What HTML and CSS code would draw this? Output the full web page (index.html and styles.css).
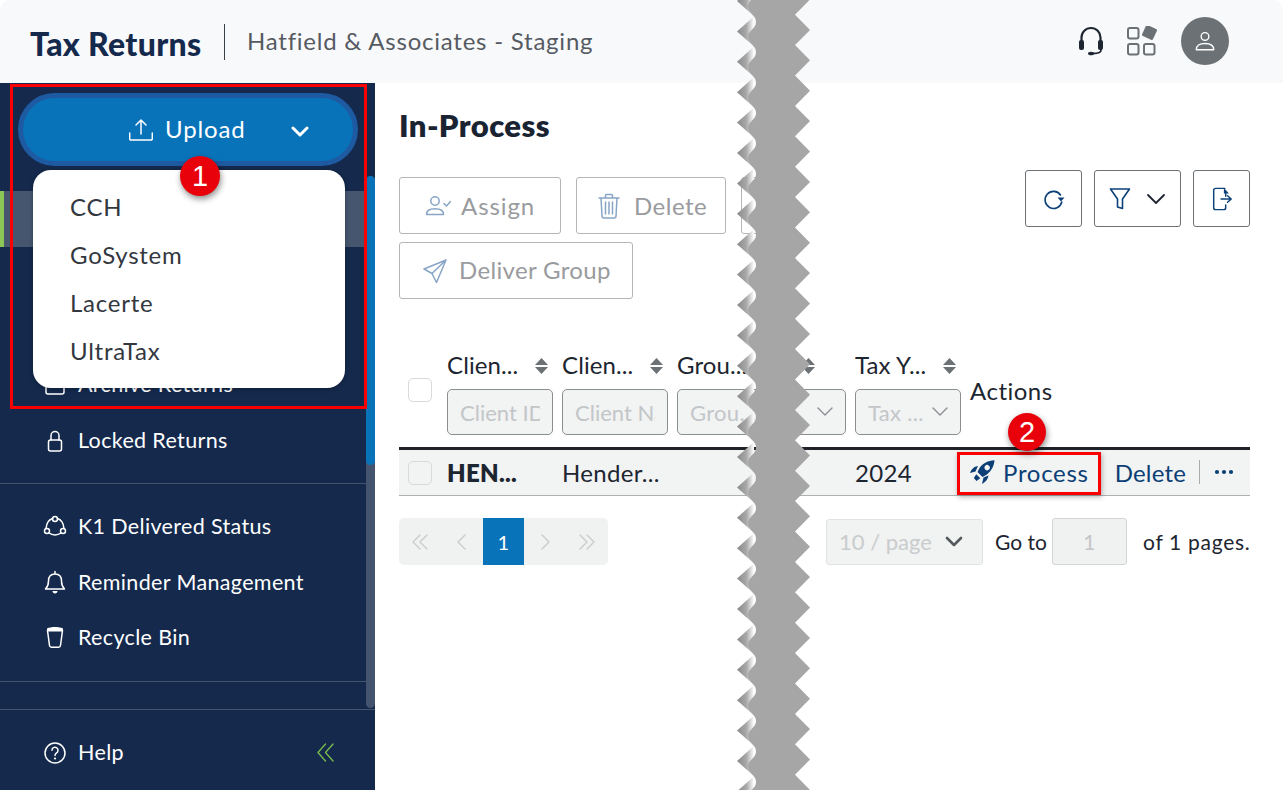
FILE: index.html
```html
<!DOCTYPE html>
<html lang="en">
<head>
<meta charset="utf-8">
<title>Tax Returns</title>
<link rel="stylesheet" href="styles.css">
</head>
<body>
<div class="app">
  <header class="topbar">
    <span class="brand">Tax Returns</span>
    <span class="brand-sep"></span>
    <span class="firm">Hatfield &amp; Associates - Staging</span>
    <div class="top-icons">
      <svg class="ico-headset" viewBox="0 0 26 30"><path class="line-dark thick" d="M3.500 17V11.500a9.500 9.500 0 0 1 19 0V17"/><rect class="fill-dark" x="1" y="14" width="5" height="10" rx="2"/><rect class="fill-dark" x="20" y="14" width="5" height="10" rx="2"/><path class="line-dark" d="M23 24c0 2.500-3 3.500-8 3.500"/><ellipse class="fill-dark" cx="13" cy="27.500" rx="3" ry="1.800"/></svg>
      <svg class="ico-apps" viewBox="0 0 30 30"><rect class="line-grey" x="1" y="2" width="10.500" height="10.500" rx="2"/><rect class="line-grey" x="1" y="18" width="10.500" height="10.500" rx="2"/><rect class="line-grey" x="17" y="18" width="10.500" height="10.500" rx="2"/><rect class="fill-grey" x="16.500" y="0.500" width="12" height="12" rx="1.500" transform="rotate(25 22.500 6.500)"/></svg>
      <span class="avatar"><svg viewBox="0 0 24 24"><circle class="line-white" cx="12" cy="7" r="4.200"/><path class="line-white" d="M2.500 21.500c0-4.500 3.500-6.800 9.500-6.800s9.500 2.300 9.500 6.800z"/></svg></span>
    </div>
  </header>

  <aside class="sidebar">
    <div class="upload-wrap">
      <button class="upload">
        <svg class="ico-upload" viewBox="0 0 24 22"><path class="line-white" d="M12 15V1.500M7 6l5-5 5 5M.7 14v5.800a1.200 1.200 0 0 0 1.200 1.200h20.200a1.200 1.200 0 0 0 1.200-1.200V14"/></svg>
        <span class="upload-label">Upload</span>
        <svg class="ico-caret" viewBox="0 0 18 12"><path class="line-white thick" d="M2 2l7 7 7-7"/></svg>
      </button>
    </div>
    <nav class="nav">
      <div class="nav-item selected"></div>
      <div class="nav-item"></div>
      <div class="nav-item"></div>
      <div class="nav-item">
        <svg class="nav-ico" viewBox="0 0 24 24"><rect class="line-white" x="3" y="5" width="18" height="16" rx="2"/></svg>
        <span>Archive Returns</span>
      </div>
      <div class="nav-item">
        <svg class="nav-ico" viewBox="0 0 24 24"><path class="line-white" d="M8 11V6.500a4 4 0 0 1 8 0V11"/><rect class="line-white" x="5.500" y="11" width="13" height="11" rx="2"/></svg>
        <span>Locked Returns</span>
      </div>
    </nav>
    <nav class="nav nav-second">
      <div class="nav-item">
        <svg class="nav-ico" viewBox="0 0 24 24"><circle class="line-white" cx="12" cy="5" r="2.500"/><circle class="line-white" cx="4" cy="17" r="2.500"/><circle class="line-white" cx="20" cy="17" r="2.500"/><path class="line-white" d="M9.700 4.500C6 5.500 3.500 9 3 14.500M14.300 4.500C18 5.500 20.500 9 21 14.500M6 19c3.500 2.500 8.500 2.500 12 0"/></svg>
        <span>K1 Delivered Status</span>
      </div>
      <div class="nav-item">
        <svg class="nav-ico" viewBox="0 0 24 24"><path class="line-white" d="M12 4c-4.500 0-6.500 3-6.500 7 0 4-1 6-3 8h19c-2-2-3-4-3-8 0-4-2-7-6.500-7zM12 1.500V4"/><path class="fill-white" d="M9.500 21h5c0 1.500-1 2.500-2.500 2.500S9.500 22.500 9.500 21z"/></svg>
        <span>Reminder Management</span>
      </div>
      <div class="nav-item">
        <svg class="nav-ico" viewBox="0 0 24 24"><path class="line-white" d="M4.500 5.500l2 15a2 2 0 0 0 2 1.700h7a2 2 0 0 0 2-1.700l2-15"/><path class="fill-white" d="M4 3.500C8 1.500 16 1.500 20 3.500V6.500H4z"/></svg>
        <span>Recycle Bin</span>
      </div>
    </nav>
    <div class="side-foot">
      <svg class="nav-ico" viewBox="0 0 24 24"><circle class="line-white" cx="12" cy="12" r="10"/><path class="line-white" d="M9 9.300a3 3 0 1 1 4.600 2.500c-1 .7-1.600 1.300-1.600 2.700"/><circle class="fill-white" cx="12" cy="17.500" r="1.100"/></svg>
      <span class="help">Help</span>
      <svg class="ico-collapse" viewBox="0 0 18 20"><path class="line-green" d="M9 1L1 10l8 9M17 1L9 10l8 9"/></svg>
    </div>
    <div class="scroll-track"><div class="scroll-thumb"></div></div>
    <div class="red-box red-upload"></div>
    <ul class="menu">
      <li>CCH</li>
      <li>GoSystem</li>
      <li>Lacerte</li>
      <li>UltraTax</li>
    </ul>
    <span class="badge badge-one">1</span>
  </aside>

  <main class="content">
    <h1 class="page-title">In-Process</h1>
    <div class="toolbar">
      <div class="actions-left">
        <button class="btn btn-assign">
          <svg class="btn-ico" viewBox="0 0 26 22"><circle class="line-blue" cx="10" cy="6" r="4.200"/><path class="line-blue" d="M1.500 19.500c0-4 3.500-5.700 8.500-5.700s8.500 1.700 8.500 5.700zM19 8.500l2.500 2.500 4-4.500"/></svg>
          <span>Assign</span>
        </button>
        <button class="btn btn-delete">
          <svg class="btn-ico trash" viewBox="0 0 22 26"><path class="line-blue" d="M1 5h20M7.500 5V2.500a1 1 0 0 1 1-1h5a1 1 0 0 1 1 1V5M3 5l1 18a2 2 0 0 0 2 2h10a2 2 0 0 0 2-2l1-18M7.500 9v12M11 9v12M14.500 9v12"/></svg>
          <span>Delete</span>
        </button>
        <button class="btn btn-hidden"></button>
        <button class="btn btn-deliver">
          <svg class="btn-ico" viewBox="0 0 24 24"><path class="line-blue" d="M23 1L1 10l8 4.500 4.500 9zM23 1L9 14.500"/></svg>
          <span>Deliver Group</span>
        </button>
      </div>
      <div class="actions-right">
        <button class="tool tool-square"><svg class="tool-ico" viewBox="0 0 22 22"><path class="line-navy" d="M17.500 7A8.500 8.500 0 1 0 18.800 14"/><path class="fill-navy" d="M14.500 9.500h7l-3.500 4z"/></svg></button>
        <button class="tool tool-filter">
          <svg class="tool-ico" viewBox="0 0 22 24"><path class="line-navy" d="M1.500 2h19l-7 10v9.500l-5-1.500v-8z"/></svg>
          <svg class="tool-caret" viewBox="0 0 20 12"><path class="line-dark" d="M2 2l8 8 8-8"/></svg>
        </button>
        <button class="tool tool-square"><svg class="tool-ico" viewBox="0 0 22 26"><path class="line-navy" d="M14 1.500H4a2 2 0 0 0-2 2v19a2 2 0 0 0 2 2h9a2 2 0 0 0 2-2v-3M15 10V7"/><path class="fill-navy" d="M13 1l5.500 6H13z"/><path class="line-navy" d="M10 13h11M17 9.500l4 3.500-4 3.500"/></svg></button>
      </div>
    </div>

    <div class="grid-table">
      <div class="thead">
        <div class="th th-check"><span class="check"></span></div>
        <div class="th"><div class="th-title"><span class="th-label">Clien...</span><svg class="sort" viewBox="0 0 13 16"><path class="fill-sort" d="M6.500 0L13 7H0zM0 9h13L6.500 16z"/></svg></div><div class="filter-input"><input class="ph-input" placeholder="Client ID" disabled></div></div>
        <div class="th"><div class="th-title"><span class="th-label">Clien...</span><svg class="sort" viewBox="0 0 13 16"><path class="fill-sort" d="M6.500 0L13 7H0zM0 9h13L6.500 16z"/></svg></div><div class="filter-input"><input class="ph-input" placeholder="Client Name" disabled></div></div>
        <div class="th"><div class="th-title"><span class="th-label">Grou...</span><svg class="sort" viewBox="0 0 13 16"><path class="fill-sort" d="M6.500 0L13 7H0zM0 9h13L6.500 16z"/></svg></div><div class="filter-input"><span class="ph">Grou...</span></div></div>
        <div class="th"><div class="th-title th-right"><svg class="sort" viewBox="0 0 13 16"><path class="fill-sort" d="M6.500 0L13 7H0zM0 9h13L6.500 16z"/></svg></div><div class="filter-input filter-tail"><svg class="input-caret" viewBox="0 0 16 10"><path class="line-mid" d="M1 1l7 7 7-7"/></svg></div></div>
        <div class="th"><div class="th-title"><span class="th-label">Tax Y...</span><svg class="sort" viewBox="0 0 13 16"><path class="fill-sort" d="M6.500 0L13 7H0zM0 9h13L6.500 16z"/></svg></div><div class="filter-input"><span class="ph">Tax ...</span><svg class="input-caret" viewBox="0 0 16 10"><path class="line-mid" d="M1 1l7 7 7-7"/></svg></div></div>
        <div class="th th-actions">Actions</div>
      </div>
      <div class="tbody-row">
        <div class="td td-check"><span class="check"></span></div>
        <div class="td strong">HEN...</div>
        <div class="td">Hender...</div>
        <div class="td"></div>
        <div class="td"></div>
        <div class="td">2024</div>
        <div class="td td-actions">
          <a class="act act-process">
            <svg class="rocket" viewBox="0 0 25 24"><path class="fill-navy" fill-rule="evenodd" d="M24.500.2C18 .5 13 3 9.500 8L7.500 12l5 5 4-2.200C21.500 11 24 6 24.500.2zM15 6a2.700 2.700 0 1 1 3.800 3.800A2.700 2.700 0 0 1 15 6z"/><path class="fill-navy" d="M8 6C5 6.500 2 8 0 13l5.500-1.500zM18.500 15.500c-.5 3-2 6-6.500 8.500l1.500-6.500zM6.300 14.300l4 4L6.500 21 3.800 18z"/></svg>
            Process
          </a>
          <a class="act act-delete">Delete</a>
          <span class="act-sep"></span>
          <svg class="dots" viewBox="0 0 20 6"><circle class="fill-navy" cx="3" cy="3" r="2.100"/><circle class="fill-navy" cx="10" cy="3" r="2.100"/><circle class="fill-navy" cx="17" cy="3" r="2.100"/></svg>
        </div>
      </div>
    </div>

    <div class="pager-row">
      <div class="pager">
        <span class="page-btn"><svg viewBox="0 0 16 16"><path class="line-page" d="M8 1L1 8l7 7M15 1L8 8l7 7"/></svg></span>
        <span class="page-btn"><svg viewBox="0 0 16 16"><path class="line-page" d="M11 1L4 8l7 7"/></svg></span>
        <span class="page-btn current">1</span>
        <span class="page-btn"><svg viewBox="0 0 16 16"><path class="line-page" d="M5 1l7 7-7 7"/></svg></span>
        <span class="page-btn"><svg viewBox="0 0 16 16"><path class="line-page" d="M1 1l7 7-7 7M8 1l7 7-7 7"/></svg></span>
      </div>
      <div class="page-size">
        <span>10 / page</span>
        <svg viewBox="0 0 18 12"><path class="line-size" d="M2 2l7 7 7-7"/></svg>
      </div>
      <span class="goto">Go to</span>
      <div class="goto-input">1</div>
      <span class="of-pages">of 1 pages.</span>
    </div>

    <div class="red-box red-process"></div>
    <span class="badge badge-two">2</span>
  </main>

  <svg class="tear" viewBox="0 0 80 790" aria-hidden="true">
    <defs>
      <linearGradient id="toothShade" x1="0" x2="1" y1="0" y2="0">
        <stop offset="0" stop-color="#8a8a8a"/>
        <stop offset=".55" stop-color="#a8a8a8"/>
        <stop offset="1" stop-color="#ffffff"/>
      </linearGradient>
    </defs>
    <path fill="url(#toothShade)" d="M18-14.200l-17 15.200 17 15.200-17 15.200 17 15.200-17 15.200 17 15.200-17 15.200 17 15.200-17 15.200 17 15.200-17 15.200 17 15.200-17 15.200 17 15.200-17 15.200 17 15.200-17 15.200 17 15.200-17 15.200 17 15.200-17 15.200 17 15.200-17 15.200 17 15.200-17 15.200 17 15.200-17 15.200 17 15.200-17 15.200 17 15.200-17 15.200 17 15.200-17 15.200 17 15.200-17 15.200 17 15.200-17 15.200 17 15.200-17 15.200 17 15.200-17 15.200 17 15.200-17 15.200 17 15.200-17 15.200 17 15.200-17 15.200 17 15.200-17 15.200 17 15.200-17 15.200 17 15.200-17 15.200 17 15.200z"/>
    <path fill="#a6a6a6" d="M12-23.700c0 7 8 8.200 8 15.200s-8 8.200-8 15.200s8 8.200 8 15.200s-8 8.200-8 15.200s8 8.200 8 15.200s-8 8.200-8 15.200s8 8.200 8 15.200s-8 8.200-8 15.200s8 8.200 8 15.200s-8 8.200-8 15.200s8 8.200 8 15.200s-8 8.200-8 15.200s8 8.200 8 15.200s-8 8.200-8 15.200s8 8.200 8 15.200s-8 8.200-8 15.200s8 8.200 8 15.200s-8 8.200-8 15.200s8 8.200 8 15.200s-8 8.200-8 15.200s8 8.200 8 15.200s-8 8.200-8 15.200s8 8.200 8 15.200s-8 8.200-8 15.200s8 8.200 8 15.200s-8 8.200-8 15.200s8 8.200 8 15.200s-8 8.200-8 15.200s8 8.200 8 15.200s-8 8.200-8 15.200s8 8.200 8 15.200s-8 8.200-8 15.200s8 8.200 8 15.200s-8 8.200-8 15.200s8 8.200 8 15.200s-8 8.200-8 15.200s8 8.200 8 15.200s-8 8.200-8 15.200s8 8.200 8 15.200s-8 8.200-8 15.200s8 8.200 8 15.200s-8 8.200-8 15.200s8 8.200 8 15.200s-8 8.200-8 15.200s8 8.200 8 15.200s-8 8.200-8 15.200s8 8.200 8 15.200s-8 8.200-8 15.200s8 8.200 8 15.200s-8 8.200-8 15.200s8 8.200 8 15.200s-8 8.200-8 15.200s8 8.200 8 15.200s-8 8.200-8 15.200s8 8.200 8 15.200s-8 8.200-8 15.200H50V-23.700z"/>
    <path fill="#a6a6a6" d="M40-15.700H59l15 15.200-15 15.200 15 15.200-15 15.200 15 15.200-15 15.200 15 15.200-15 15.200 15 15.200-15 15.200 15 15.200-15 15.200 15 15.200-15 15.200 15 15.200-15 15.200 15 15.200-15 15.200 15 15.200-15 15.200 15 15.200-15 15.200 15 15.200-15 15.200 15 15.200-15 15.200 15 15.200-15 15.200 15 15.200-15 15.200 15 15.200-15 15.200 15 15.200-15 15.200 15 15.200-15 15.200 15 15.200-15 15.200 15 15.200-15 15.200 15 15.200-15 15.200 15 15.200-15 15.200 15 15.200-15 15.200 15 15.200-15 15.200 15 15.200-15 15.200 15 15.200-15 15.200 15 15.200-15 15.200 15 15.200-15 15.200H40z"/>
  </svg>
</div>
</body>
</html>
```
FILE: styles.css
```css
* { box-sizing: border-box; }
html, body { margin: 0; padding: 0; background: #fff; overflow: hidden; }
body { font-family: "Lato", "Noto Sans", sans-serif; color: #1d2530; }
button { font: inherit; background: none; padding: 0; cursor: default; }
ul { margin: 0; padding: 0; list-style: none; }

.app {
  position: relative;
  width: 1283px;
  height: 790px;
  display: grid;
  grid-template-columns: 375px 1fr;
  grid-template-rows: 83px 1fr;
  overflow: hidden;
}

/* SVG strokes and fills */
svg { display: block; flex: none; }
.line-dark, .line-grey, .line-white, .line-green, .line-blue, .line-navy, .line-mid, .line-page, .line-size { fill: none; stroke-linecap: round; stroke-linejoin: round; }
.line-dark { stroke: #1d2530; stroke-width: 1.8; }
.line-dark.thick { stroke-width: 2.2; }
.line-grey { stroke: #6c7175; stroke-width: 2; }
.line-white { stroke: #fff; stroke-width: 1.5; }
.line-white.thick { stroke-width: 3; }
.line-green { stroke: #7cc04b; stroke-width: 1.3; }
.line-blue { stroke: #88a5c6; stroke-width: 1.5; }
.line-navy { stroke: #0b4079; stroke-width: 1.6; }
.line-mid { stroke: #8a8f94; stroke-width: 1.4; }
.line-page { stroke: #c9cccd; stroke-width: 1.4; }
.line-size { stroke: #55595d; stroke-width: 2.6; }
.fill-dark { fill: #1d2530; }
.fill-grey { fill: #6c7175; }
.fill-white { fill: #fff; }
.fill-navy { fill: #0b3f75; }
.fill-sort { fill: #6c7175; }

/* Top bar */
.topbar {
  grid-column: 1 / -1;
  display: flex;
  align-items: center;
  background: #f8f9fb;
  border-radius: 10px 10px 0 0;
  padding-left: 30px;
}
.brand { font-size: 32px; font-weight: 900; color: #14294c; letter-spacing: .3px; width: 194px; white-space: nowrap; padding-top: 3px; }
.brand-sep { width: 1px; height: 36px; background: #3a4048; margin-right: 22px; }
.firm { font-size: 24px; color: #565b62; letter-spacing: .77px; white-space: nowrap; padding-bottom: 2px; }
.top-icons { margin-left: auto; display: flex; align-items: center; padding: 0 54px 2px 0; }
.ico-headset { width: 26px; height: 30px; margin-right: 23px; }
.ico-apps { width: 30px; height: 30px; margin-right: 24px; }
.avatar { width: 48px; height: 48px; border-radius: 50%; background: #6c7175; display: flex; align-items: center; justify-content: center; }
.avatar svg { width: 22px; height: 22px; }

/* Sidebar */
.sidebar {
  position: relative;
  background: #14294c;
  display: flex;
  flex-direction: column;
  color: #fff;
  font-size: 21.5px;
}
.upload-wrap { padding: 10px 17px 25px 18px; }
.upload {
  width: 340px;
  height: 73px;
  border: 5px solid #1e5aa2;
  border-radius: 37px;
  background: #0973ba;
  color: #fff;
  display: flex;
  align-items: center;
  padding-left: 106px;
}
.ico-upload { width: 24px; height: 22px; }
.upload-label { font-size: 24px; letter-spacing: .85px; margin-left: 12px; width: 126px; text-align: left; padding-bottom: 2px; }
.ico-caret { width: 18px; height: 12px; margin-top: 4px; }
.nav { width: 100%; }
.nav-item { height: 55.6px; display: flex; align-items: center; padding: 0 0 1px 43px; letter-spacing: .35px; white-space: nowrap; }
.nav-item span { padding-bottom: 2px; }
.nav-second .nav-item span { padding-bottom: 0; }
.nav-item.selected { background: #46566f; border-left: 4px solid #8bc656; }
.nav-ico { width: 24px; height: 24px; margin-right: 11px; }
.nav-second {
  margin-top: 14px;
  padding: 15px 0;
  border-top: 1px solid #44546f;
  border-bottom: 1px solid #44546f;
}
.side-foot {
  margin-top: 27px;
  flex: 1;
  border-top: 1px solid #44546f;
  display: flex;
  align-items: center;
  padding: 6px 41px 0 43px;
}
.help { letter-spacing: .35px; padding-bottom: 2px; }
.ico-collapse { width: 17px; height: 19px; margin-left: auto; }
.scroll-track { position: absolute; right: 0; top: 93px; bottom: 82px; width: 9px; background: #44546f; border-radius: 5px; }
.scroll-thumb { height: 289px; background: #0973ba; border-radius: 5px; }

.red-box { position: absolute; border: 3px solid #fa0000; }
.red-upload { left: 10px; top: 1px; width: 357px; height: 325px; }
.menu {
  position: absolute;
  left: 33px;
  top: 87px;
  width: 312px;
  height: 218px;
  background: #fff;
  border-radius: 18px;
  box-shadow: 0 1px 4px rgba(0, 0, 0, .3);
  padding: 12px 0 0 37px;
  color: #33383f;
  font-size: 24px;
  letter-spacing: .75px;
}
.menu li { height: 48px; display: flex; align-items: center; }
.badge {
  position: absolute;
  width: 40px;
  height: 40px;
  border-radius: 50%;
  background: #e8000b;
  color: #fff;
  font-family: "Liberation Sans", sans-serif;
  font-size: 29px;
  display: flex;
  align-items: center;
  justify-content: center;
  box-shadow: 1px 3px 6px rgba(0, 0, 0, .45);
}
.badge-one { left: 180px; top: 73px; }
.badge-two { left: 633px; top: 330px; width: 38px; height: 38px; z-index: 2; }

/* Content */
.content { position: relative; padding: 0 33px 0 24px; min-width: 0; }
.page-title { margin: 0; font-size: 31px; font-weight: 800; line-height: 40px; padding-top: 22px; color: #1a2332; letter-spacing: .4px; }
.toolbar { margin-top: 25px; display: flex; justify-content: space-between; align-items: flex-start; }
.actions-left { width: 400px; display: flex; flex-wrap: wrap; gap: 8px 15px; margin-top: 7px; }
.btn {
  height: 57px;
  border: 1px solid #b3b5b7;
  border-radius: 3px;
  background: #fff;
  color: #999b9e;
  font-size: 24px;
  letter-spacing: .5px;
  display: flex;
  align-items: center;
}
.btn-assign { width: 162px; padding-left: 25px; letter-spacing: .9px; }
.btn-delete { width: 150px; padding-left: 21px; }
.btn-hidden { width: 50px; }
.btn-deliver { width: 234px; padding-left: 23px; letter-spacing: .35px; }
.btn-deliver span { padding-bottom: 2px; }
.btn-ico { width: 24px; height: 24px; margin-right: 12px; }
.btn-assign .btn-ico { width: 26px; height: 22px; margin-right: 10px; }
.btn-delete .btn-ico { width: 22px; height: 26px; margin-right: 14px; }
.actions-right { display: flex; gap: 12px; }
.tool {
  height: 57px;
  border: 1px solid #6c7175;
  border-radius: 3px;
  background: #fff;
  display: flex;
  align-items: center;
  justify-content: center;
}
.tool-square { width: 57px; }
.tool-filter { width: 87px; gap: 15px; }
.tool-ico { width: 22px; height: 24px; }
.tool-caret { width: 20px; height: 12px; }

.grid-table { margin-top: 46px; }
.thead, .tbody-row { display: grid; grid-template-columns: 48px 115px 115px 115px 63px 115px 1fr; }
.thead { border-bottom: 3px solid #1f2329; height: 105px; }
.th { padding-bottom: 12px; min-width: 0; }
.th-check { display: flex; align-items: center; padding-left: 9px; }
.th-title { height: 42px; display: flex; align-items: center; justify-content: space-between; padding-right: 14px; }
.th-right { justify-content: flex-end; padding-right: 40px; }
.th-label { font-size: 24px; letter-spacing: .1px; color: #1d2530; white-space: nowrap; padding-bottom: 3px; }
.sort { width: 13px; height: 16px; }
.filter-input {
  margin-top: 2px;
  width: 106px;
  height: 46px;
  border: 1px solid #8b8e91;
  border-radius: 5px;
  background: #f2f3f3;
  display: flex;
  align-items: center;
  padding: 0 12px;
  overflow: hidden;
  justify-content: space-between;
}
.filter-tail { width: 54px; justify-content: flex-end; }
.ph { min-width: 0; font-size: 22px; color: #c3c6c8; white-space: nowrap; letter-spacing: .3px; overflow: hidden; }
.ph-input { width: 100%; min-width: 0; border: 0; padding: 0; background: transparent; font: inherit; font-size: 22px; outline: none; }
.ph-input::placeholder { color: #c3c6c8; opacity: 1; }
.input-caret { width: 16px; height: 10px; }
.th-actions { display: flex; align-items: center; font-size: 24px; letter-spacing: .5px; white-space: nowrap; }
.check { width: 24px; height: 24px; border: 1px solid #d8d9da; border-radius: 5px; background: transparent; display: block; }
.tbody-row { height: 46px; background: #f2f3f3; border-bottom: 1px solid #aeb0b2; }
.td { display: flex; align-items: center; font-size: 24px; letter-spacing: .3px; white-space: nowrap; min-width: 0; padding-bottom: 1px; }
.td-check { padding-left: 9px; padding-bottom: 0; }
.strong { font-weight: 800; }
.td-actions { color: #0b3f75; }
.act { display: flex; align-items: center; }
.act-process { letter-spacing: .7px; }
.rocket { width: 25px; height: 24px; margin-right: 8px; }
.act-delete { margin-left: 26px; letter-spacing: .2px; }
.act-sep { width: 1px; height: 24px; background: #a8aaac; margin: 0 14px 0 13px; }
.dots { width: 20px; height: 6px; }

.pager-row { margin-top: 22px; display: flex; align-items: center; font-size: 21px; letter-spacing: .5px; }
.pager { display: flex; height: 47px; background: #f0f1f1; border-radius: 5px; margin-right: auto; width: 209px; overflow: hidden; }
.page-btn { flex: 1; display: flex; align-items: center; justify-content: center; }
.page-btn svg { width: 16px; height: 16px; }
.page-btn.current { background: #0973ba; color: #fff; flex: none; width: 41px; font-size: 20px; }
.page-size {
  width: 157px;
  height: 46px;
  border: 1px solid #e1e2e3;
  border-radius: 3px;
  background: #f1f2f2;
  color: #c9cccd;
  font-size: 22px;
  letter-spacing: 0;
  display: flex;
  align-items: center;
  justify-content: space-between;
  padding: 0 19px 0 12px;
}
.page-size svg { width: 18px; height: 12px; }
.goto { margin-left: 12px; width: 57px; color: #1d2530; letter-spacing: 0; }
.goto-input {
  width: 75px;
  height: 47px;
  border: 1px solid #d4d5d6;
  border-radius: 3px;
  background: #f0f1f1;
  color: #c3c6c8;
  display: flex;
  align-items: center;
  justify-content: center;
}
.of-pages { margin-left: 16px; width: 107px; white-space: nowrap; color: #1d2530; letter-spacing: .7px; }
.red-process { left: 582px; top: 369px; width: 144px; height: 43px; box-shadow: 1px 2px 5px rgba(0, 0, 0, .3); }

/* Torn-paper divider lying over the whole page */
.tear { position: absolute; left: 736px; top: 0; width: 80px; height: 790px; z-index: 5; }
```
